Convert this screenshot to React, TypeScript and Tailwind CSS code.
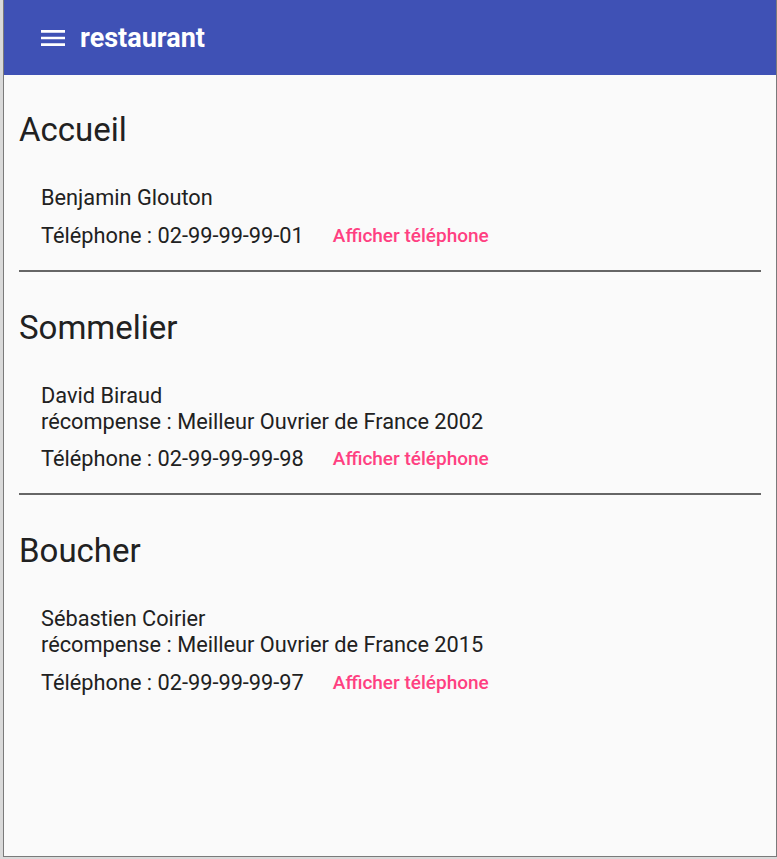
interface Person {
  name: string;
  award?: string;
  phone: string;
}

interface Section {
  title: string;
  people: Person[];
}

const SECTIONS: Section[] = [
  { title: 'Accueil', people: [{ name: 'Benjamin Glouton', phone: '02-99-99-99-01' }] },
  {
    title: 'Sommelier',
    people: [{ name: 'David Biraud', award: 'Meilleur Ouvrier de France 2002', phone: '02-99-99-99-98' }],
  },
  {
    title: 'Boucher',
    people: [{ name: 'Sébastien Coirier', award: 'Meilleur Ouvrier de France 2015', phone: '02-99-99-99-97' }],
  },
];

function MenuIcon() {
  return (
    <svg width="32" height="32" viewBox="0 0 24 24" fill="currentColor">
      <path d="M3 18h18v-2H3v2zm0-5h18v-2H3v2zm0-7v2h18V6H3z" />
    </svg>
  );
}

function PersonCard({ person }: { person: Person }) {
  return (
    <div className="pl-[22px] text-[21.75px] leading-[26px] text-[#212121]">
      <div>{person.name}</div>
      {person.award && <div>récompense : {person.award}</div>}
      <div className="mt-[11.5px] flex h-[26px] items-center">
        <span>Téléphone : {person.phone}</span>
        <button className="ml-[29px] text-[19px] font-medium text-[#ff4081]">Afficher téléphone</button>
      </div>
    </div>
  );
}

export default function App() {
  return (
    <div className="h-[859px] w-[777px] overflow-hidden bg-[#d9d9d9]" style={{ fontFamily: 'Roboto, "Noto Sans", sans-serif' }}>
      <div className="ml-[3px] flex h-[857px] w-[774px] flex-col border-x border-b border-[#7a7a7a] bg-[#fafafa]">
        <header className="flex h-[75px] shrink-0 items-center bg-[#3f51b5] pl-[33px] pt-[1px] text-white">
          <MenuIcon />
          <span className="ml-[11px] text-[27px] font-bold">restaurant</span>
        </header>

        <main className="px-[15px] pt-[34px]">
          {SECTIONS.map((section, i) => (
            <section key={section.title}>
              {i > 0 && <hr className="mb-[35px] mt-[21px] border-t-2 border-[#666]" />}
              <h2 className="text-[33px] leading-[42px] text-[#212121]">{section.title}</h2>
              <div className="mt-[34px]">
                {section.people.map(p => (
                  <PersonCard key={p.name} person={p} />
                ))}
              </div>
            </section>
          ))}
        </main>
      </div>
    </div>
  );
}
